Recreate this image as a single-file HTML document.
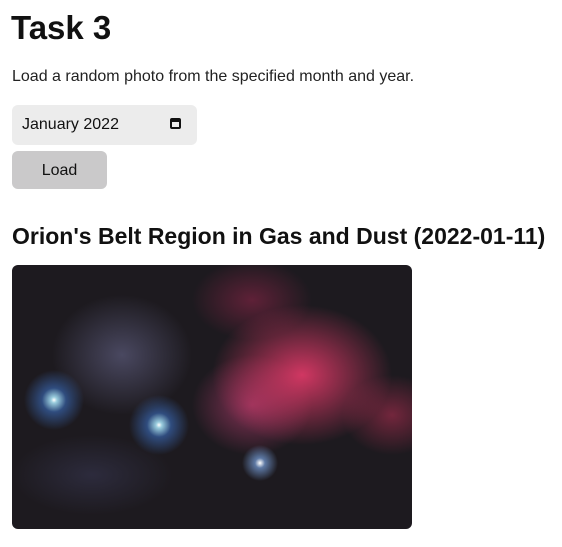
<!DOCTYPE html>
<html><head><style>
body{margin:0;background:#fff;font-family:"Liberation Sans",sans-serif;color:#111;position:relative;width:562px;height:547px;overflow:hidden}
.a{position:absolute}
</style></head><body>
<div class="a" style="left:11px;top:9px;font-size:33px;font-weight:bold">Task 3</div>
<div class="a" style="left:12px;top:68px;font-size:16px;color:#222">Load a random photo from the specified month and year.</div>
<div class="a" style="left:12px;top:105px;width:185px;height:40px;background:#ececec;border-radius:6px"></div>
<div class="a" style="left:22px;top:116px;font-size:16px">January&nbsp;2022</div>
<div class="a" style="left:170px;top:118px;width:11px;height:11px;border:2px solid #111;border-top-width:4px;border-radius:2px;box-sizing:border-box"></div>
<div class="a" style="left:12px;top:151px;width:95px;height:38px;background:#cac9ca;border-radius:6px;text-align:center;line-height:40px;font-size:16px">Load</div>
<div class="a" style="left:12px;top:223px;font-size:23px;font-weight:bold">Orion's Belt Region in Gas and Dust (2022-01-11)</div>
<div class="a" style="left:12px;top:265px;width:400px;height:264px;border-radius:6px;overflow:hidden;background:
radial-gradient(circle at 42px 135px,#fff 0,#9cd 3px,rgba(60,110,190,.6) 12px,transparent 30px),
radial-gradient(circle at 147px 160px,#fff 0,#9cd 3px,rgba(60,110,190,.6) 12px,transparent 30px),
radial-gradient(circle at 248px 198px,#fff 0,rgba(120,160,220,.7) 5px,transparent 18px),
radial-gradient(ellipse 90px 70px at 290px 110px,rgba(240,60,110,.85),transparent),
radial-gradient(ellipse 60px 50px at 240px 140px,rgba(180,60,110,.7),transparent),
radial-gradient(ellipse 70px 60px at 110px 90px,rgba(110,110,150,.55),transparent),
radial-gradient(ellipse 80px 40px at 80px 210px,rgba(60,60,90,.5),transparent),
radial-gradient(ellipse 60px 40px at 240px 35px,rgba(160,40,80,.5),transparent),
radial-gradient(ellipse 50px 40px at 380px 150px,rgba(200,50,90,.5),transparent),
#1d1a1f"></div>
</body></html>
